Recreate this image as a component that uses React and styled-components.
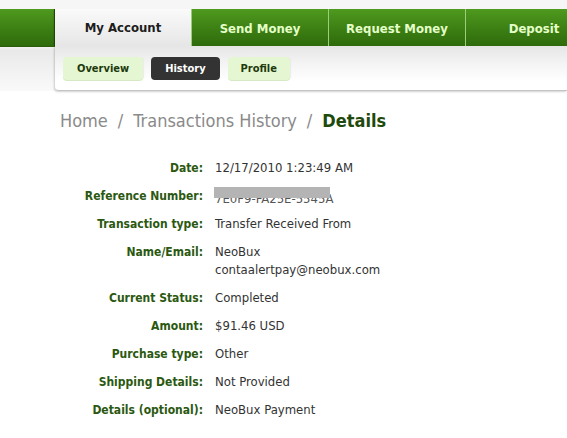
import React from "react";
import styled, { createGlobalStyle } from "styled-components";

const Global = createGlobalStyle`
  html, body { margin: 0; padding: 0; background: #fff; }
  body { font-family: "DejaVu Sans Condensed", "DejaVu Sans", sans-serif; width: 567px; overflow: hidden; }
`;

const Page = styled.div`
  background: linear-gradient(#f6f6f6 0px, #f6f6f6 46px, #e9e9e9 50px, #fff 104px);
  padding-top: 9px;
`;

const NavBar = styled.div`
  display: flex;
  height: 37px;
  overflow: hidden;
  background: linear-gradient(#4f9a1f, #3a7c12 60%, #2f6b0c);
  border-bottom: 1px solid #2b5e0a;
`;

const NavLead = styled.div`
  width: 54px;
  flex: none;
  border-right: 1px solid #25520a;
`;

const Tab = styled.div`
  width: 136px;
  flex: none;
  display: flex;
  align-items: center;
  justify-content: center;
  font-weight: bold;
  font-size: 13px;
  color: ${p => (p.$active ? "#1c1c1c" : "#e4ffc8")};
  background: ${p => (p.$active ? "linear-gradient(#fafafa, #e6e6e6)" : "transparent")};
  border-left: ${p => (p.$active ? "0" : "1px solid #9ccd78")};
  padding-top: ${p => (p.$active ? "0" : "1px")};
  box-shadow: ${p => (p.$active ? "-1px 0 2px rgba(0,0,0,0.25)" : "none")};
  &:first-of-type { border-left: 0; }
`;

const SubPanel = styled.div`
  margin-left: 55px;
  margin-top: -1px;
  height: 44px;
  display: flex;
  align-items: center;
  gap: 8px;
  padding-left: 8px;
  background: linear-gradient(#e6e6e6, #f4f4f4 40%, #fff 80%);
  border-bottom: 1px solid #c4c4c4;
  border-bottom-left-radius: 4px;
  box-shadow: -1px 1px 2px rgba(0,0,0,0.18);
`;

const Pill = styled.div`
  height: 23px;
  padding: 0 ${p => p.$pad || 14}px;
  display: flex;
  align-items: center;
  font-weight: bold;
  font-size: 11px;
  border-radius: 4px;
  color: ${p => (p.$active ? "#fff" : "#1d3a0c")};
  background: ${p => (p.$active ? "#333" : "#e5f7d2")};
  box-shadow: ${p => (p.$active ? "none" : "0 1px 0 #d7e9c4, 1px 0 1px #eaeaea")};
`;

const Crumbs = styled.div`
  margin: 18px 0 0 60px;
  font-size: 18px;
  line-height: 24px;
  color: #8a8a8a;
  display: flex;
  gap: 10px;
`;

const Current = styled.span`
  color: #1f4a0c;
  font-weight: 600;
`;

const Details = styled.div`
  display: grid;
  grid-template-columns: 143px 1fr;
  column-gap: 12px;
  row-gap: 10px;
  margin: 26px 0 0 60px;
  line-height: 18px;
`;

const Label = styled.div`
  text-align: right;
  font-weight: bold;
  font-size: 12px;
  color: #2b5810;
`;

const Value = styled.div`
  color: #333;
  font-size: 13px;
  position: relative;
`;

const Redact = styled.span`
  position: absolute;
  left: -1px;
  top: 0;
  width: 116px;
  height: 11px;
  background: #b4b4b4;
`;

const Clipped = styled.span`
  color: #555;
  position: relative;
  top: 3px;
`;

const rows = [
  ["Date:", "12/17/2010 1:23:49 AM"],
  ["Reference Number:", "ref"],
  ["Transaction type:", "Transfer Received From"],
  ["Name/Email:", ["NeoBux", "contaalertpay@neobux.com"]],
  ["Current Status:", "Completed"],
  ["Amount:", "$91.46 USD"],
  ["Purchase type:", "Other"],
  ["Shipping Details:", "Not Provided"],
  ["Details (optional):", "NeoBux Payment"],
];

export default function App() {
  return (
    <>
      <Global />
      <Page>
        <NavBar>
          <NavLead />
          <Tab $active>My Account</Tab>
          <Tab>Send Money</Tab>
          <Tab>Request Money</Tab>
          <Tab>Deposit</Tab>
        </NavBar>
        <SubPanel>
          <Pill>Overview</Pill>
          <Pill $active>History</Pill>
          <Pill $pad={13}>Profile</Pill>
        </SubPanel>
      </Page>
      <Crumbs>
        <span>Home</span>
        <span>/</span>
        <span>Transactions History</span>
        <span>/</span>
        <Current>Details</Current>
      </Crumbs>
      <Details>
        {rows.map(([l, v]) => (
          <React.Fragment key={l}>
            <Label>{l}</Label>
            <Value>
              {v === "ref" ? (
                <>
                  <Clipped>7E0F9-FA25E-5545A</Clipped>
                  <Redact />
                </>
              ) : Array.isArray(v) ? (
                v.map(x => <div key={x}>{x}</div>)
              ) : (
                v
              )}
            </Value>
          </React.Fragment>
        ))}
      </Details>
    </>
  );
}
